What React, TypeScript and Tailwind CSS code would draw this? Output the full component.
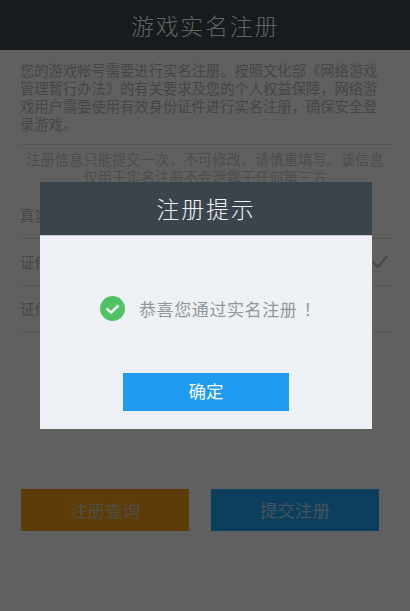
import React from "react";

const font = { fontFamily: '"Noto Sans CJK SC", sans-serif' };

function FormRow({ label, children }: { label: string; children?: React.ReactNode }) {
  return (
    <div className="flex h-[47px] items-center justify-between border-b border-[#555655] text-[14.5px] text-[#454746]">
      <span>{label}</span>
      {children}
    </div>
  );
}

export default function App() {
  return (
    <div
      className="relative h-[611px] w-[410px] overflow-hidden bg-[#5f605f] font-['Noto_Sans_CJK_SC',sans-serif]"
      style={font}
    >
      {/* 顶部标题 */}
      <div className="flex h-[50px] items-center justify-center bg-[#171b1e] text-[23px] font-light tracking-[1.7px] text-[#626463]">
        游戏实名注册
      </div>

      <div className="pl-5 pr-[18px]">
        <p className="mt-[11px] w-[358px] text-[14.3px] leading-[18px] text-[#454746]">
          您的游戏帐号需要进行实名注册。按照文化部《网络游戏管理暂行办法》的有关要求及您的个人权益保障，网络游戏用户需要使用有效身份证件进行实名注册，确保安全登录游戏。
        </p>
        <div className="mt-[11px] border-t border-[#555655]" />
        <p className="mt-[5px] pr-[2px] text-center text-[14.3px] leading-[18px] text-[#4c4e4d]">
          注册信息只能提交一次，不可修改，请慎重填写。该信息
          <br />
          仅用于实名注册不会泄露于任何第三方
        </p>

        <div className="mt-[6px]">
          <FormRow label="真实姓名" />
          <FormRow label="证件类型">
            <svg viewBox="0 0 16 14" className="h-[14px] w-[16px] -translate-x-[4px]" fill="none" stroke="#454746" strokeWidth="2">
              <path d="M1 7l5 5L15 1" />
            </svg>
          </FormRow>
          <FormRow label="证件号码" />
        </div>
      </div>

      <div className="mt-[156px] flex justify-between pl-[21px] pr-[31px]">
        <button className="h-[42px] w-[168px] bg-[#5e3c0a] text-[17.5px] text-[#4f4f45]">注册查询</button>
        <button className="h-[42px] w-[168px] bg-[#0c3f5e] text-[17.5px] text-[#47535c]">提交注册</button>
      </div>

      {/* 弹窗 */}
      <div className="absolute left-[40px] top-[182px] w-[332px]">
        <div className="flex h-[53px] items-center justify-center bg-[#3c444b] text-[23px] font-light tracking-[1.7px] text-[#f1f3f5]">
          注册提示
        </div>
        <div className="flex h-[194px] flex-col items-center border-t border-[#c3cad0] bg-[#edf1f5]">
          <div className="mt-[60px] flex items-center gap-[14px] pl-[9px]">
            <svg viewBox="0 0 25 25" className="h-[25px] w-[25px]">
              <circle cx="12.5" cy="12.5" r="12.5" fill="#4fc264" />
              <path d="M6.5 12.5l4.5 4 7.5-7" fill="none" stroke="#edf1f5" strokeWidth="2.6" />
            </svg>
            <span className="text-[17px] tracking-[0.6px] text-[#93979a]">
              恭喜您通过实名注册<span className="ml-[6px]">！</span>
            </span>
          </div>
          <button className="mt-[51px] h-[38px] w-[166px] bg-[#1f9cf0] text-[17.5px] text-[#f3f8fc]">确定</button>
        </div>
      </div>
    </div>
  );
}
